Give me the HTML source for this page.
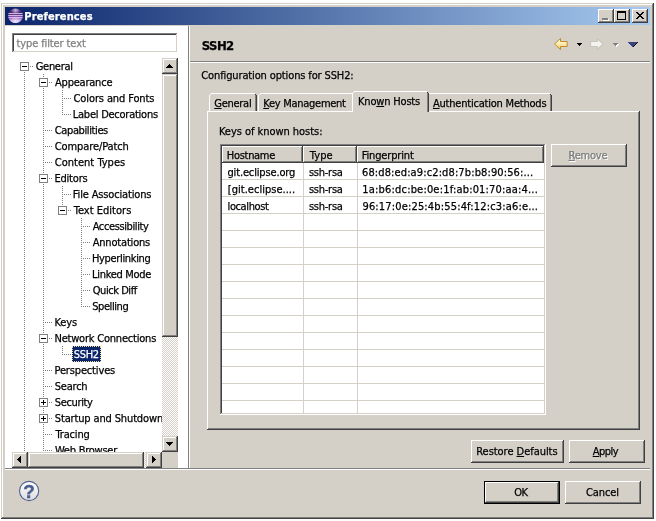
<!DOCTYPE html>
<html><head><meta charset="utf-8"><title>Preferences</title>
<style>
html,body{margin:0;padding:0;background:#fff;}
body{width:656px;height:521px;position:relative;overflow:hidden;font-family:"DejaVu Sans Condensed","Liberation Sans",sans-serif;font-size:11px;color:#000;}
div,span{position:absolute;box-sizing:border-box;white-space:nowrap;}
.t{line-height:13px;height:13px;opacity:0.999;-webkit-text-stroke:0.25px;}
u{text-decoration:underline;text-underline-offset:1px;text-decoration-thickness:1px;}
.raised{background:#d4d0c8;box-shadow:inset -1px -1px 0 #404040,inset 1px 1px 0 #fff,inset -2px -2px 0 #808080,inset 2px 2px 0 #d4d0c8;}
.sbtn{background:#d4d0c8;box-shadow:inset -1px -1px 0 #404040,inset 1px 1px 0 #d4d0c8,inset -2px -2px 0 #808080,inset 2px 2px 0 #fff;}
.sunken{background:#fff;box-shadow:inset -1px -1px 0 #fff,inset 1px 1px 0 #808080,inset -2px -2px 0 #d4d0c8,inset 2px 2px 0 #404040;}
.track{background-color:#fff;background-image:conic-gradient(#d4d0c8 25%,#fff 0 50%,#d4d0c8 0 75%,#fff 0);background-size:2px 2px;}
.hd{background:#d4d0c8;box-shadow:inset -1px -1px 0 #404040,inset 1px 1px 0 #fff,inset -2px -2px 0 #808080;}
.vd{width:1px;background-image:linear-gradient(#808080 50%,transparent 50%);background-size:1px 2px;}
.hdot{height:1px;background-image:linear-gradient(90deg,#808080 50%,transparent 50%);background-size:2px 1px;}
.box{width:9px;height:9px;border:1px solid #808080;background:#fff;}
.box i{position:absolute;left:1px;top:3px;width:5px;height:1px;background:#000;}
.box b{position:absolute;left:3px;top:1px;width:1px;height:5px;background:#000;}
</style></head>
<body>
<div style="left:1px;top:3px;width:653px;height:516px;background:#d4d0c8;box-shadow:inset -1px -1px 0 #404040,inset 1px 1px 0 #d4d0c8,inset -2px -2px 0 #808080,inset 2px 2px 0 #fff;"></div>
<div style="left:5px;top:7px;width:645px;height:18px;background:linear-gradient(90deg,#0a246a,#a6caf0);"></div>
<svg style="position:absolute;left:7px;top:8px" width="17" height="16" viewBox="0 0 17 16">
<defs><linearGradient id="eg" x1="0" y1="0" x2="0" y2="1"><stop offset="0" stop-color="#6a4a92"/><stop offset="0.3" stop-color="#4a2470"/><stop offset="0.5" stop-color="#7a3fa4"/><stop offset="0.75" stop-color="#b48ad6"/><stop offset="1" stop-color="#e4d2f2"/></linearGradient>
<radialGradient id="eh" cx="0.5" cy="0.12" r="0.3"><stop offset="0" stop-color="#d8c8e8" stop-opacity="0.9"/><stop offset="1" stop-color="#d8c8e8" stop-opacity="0"/></radialGradient>
<radialGradient id="el" cx="0.5" cy="0.95" r="0.45"><stop offset="0" stop-color="#f4eafa" stop-opacity="0.9"/><stop offset="1" stop-color="#f4eafa" stop-opacity="0"/></radialGradient></defs>
<circle cx="8.5" cy="7.8" r="7.3" fill="url(#eg)"/>
<circle cx="8.5" cy="7.8" r="7.3" fill="url(#eh)"/>
<circle cx="8.5" cy="7.8" r="7.3" fill="url(#el)"/>
<rect x="1.4" y="5" width="14.2" height="1" fill="#e6d8f0" opacity="0.8"/>
<rect x="1.2" y="7" width="14.6" height="1" fill="#e6d8f0" opacity="0.8"/>
<rect x="1.4" y="9" width="14.2" height="1" fill="#e6d6f2" opacity="0.75"/>
</svg>
<span id="t1" class="t" style="left:24.35px;top:10px;letter-spacing:0.12px;color:#fff;font-weight:bold;font-size:11px;">Preferences</span>
<div class="raised" style="left:598px;top:9px;width:16px;height:14px;"></div>
<div class="raised" style="left:614px;top:9px;width:16px;height:14px;"></div>
<div class="raised" style="left:632px;top:9px;width:16px;height:14px;"></div>
<div style="left:603px;top:19px;width:6px;height:2px;background:#fff;"></div>
<div style="left:602px;top:18px;width:6px;height:2px;background:#808080;"></div>
<div style="left:617px;top:11px;width:9px;height:9px;border:1px solid #000;border-top-width:2px;"></div>
<svg style="position:absolute;left:636px;top:12px" width="8" height="7" viewBox="0 0 8 7" shape-rendering="crispEdges"><path d="M0 0h2v1h-2zM6 0h2v1h-2zM1 1h2v1h-2zM5 1h2v1h-2zM2 2h4v1h-4zM3 3h2v1h-2zM2 4h4v1h-4zM1 5h2v1h-2zM5 5h2v1h-2zM0 6h2v1h-2zM6 6h2v1h-2z" fill="#000"/></svg>
<div style="left:5px;top:26px;width:183px;height:442px;background:#fff;"></div>
<div style="left:188px;top:26px;width:1px;height:442px;background:#808080;"></div>
<div style="left:189px;top:26px;width:1px;height:442px;background:#fff;"></div>
<div class="sunken" style="left:12px;top:33px;width:166px;height:20px;"></div>
<span id="t2" class="t" style="left:16.51px;top:37px;letter-spacing:-0.11px;color:#808080;">type filter text</span>
<div style="left:12px;top:58px;width:150px;height:394px;overflow:hidden;">
<div class="vd" style="left:12px;top:14px;width:1px;height:380px;"></div>
<div class="vd" style="left:31px;top:16px;width:1px;height:378px;"></div>
<div class="vd" style="left:50px;top:32px;width:1px;height:25px;"></div>
<div class="vd" style="left:50px;top:128px;width:1px;height:20px;"></div>
<div class="vd" style="left:50px;top:288px;width:1px;height:9px;"></div>
<div class="vd" style="left:69px;top:160px;width:1px;height:89px;"></div>
<div class="hdot" style="left:18px;top:8px;width:4px;height:1px;"></div>
<div class="box" style="left:8px;top:4px;width:9px;height:9px;"><i></i></div>
<span id="t3" class="t" style="left:23.71px;top:2px;letter-spacing:-0.29px;">General</span>
<div class="hdot" style="left:37px;top:24px;width:4px;height:1px;"></div>
<div class="box" style="left:27px;top:20px;width:9px;height:9px;"><i></i></div>
<span id="t4" class="t" style="left:43.04px;top:18px;letter-spacing:-0.22px;">Appearance</span>
<div class="hdot" style="left:50px;top:40px;width:9px;height:1px;"></div>
<span id="t5" class="t" style="left:61.56px;top:34px;letter-spacing:-0.11px;">Colors and Fonts</span>
<div class="hdot" style="left:50px;top:56px;width:9px;height:1px;"></div>
<span id="t6" class="t" style="left:60.8px;top:50px;letter-spacing:-0.25px;">Label Decorations</span>
<div class="hdot" style="left:31px;top:72px;width:9px;height:1px;"></div>
<span id="t7" class="t" style="left:42.82px;top:66px;letter-spacing:-0.39px;">Capabilities</span>
<div class="hdot" style="left:31px;top:88px;width:9px;height:1px;"></div>
<span id="t8" class="t" style="left:42.82px;top:82px;letter-spacing:-0.11px;">Compare/Patch</span>
<div class="hdot" style="left:31px;top:104px;width:9px;height:1px;"></div>
<span id="t9" class="t" style="left:42.82px;top:98px;letter-spacing:0.01px;">Content Types</span>
<div class="hdot" style="left:37px;top:120px;width:4px;height:1px;"></div>
<div class="box" style="left:27px;top:116px;width:9px;height:9px;"><i></i></div>
<span id="t10" class="t" style="left:42.47px;top:114px;letter-spacing:-0.21px;">Editors</span>
<div class="hdot" style="left:50px;top:136px;width:9px;height:1px;"></div>
<span id="t11" class="t" style="left:60.8px;top:130px;letter-spacing:-0.15px;">File Associations</span>
<div class="hdot" style="left:56px;top:152px;width:4px;height:1px;"></div>
<div class="box" style="left:46px;top:148px;width:9px;height:9px;"><i></i></div>
<span id="t12" class="t" style="left:61.7px;top:146px;letter-spacing:0.02px;">Text Editors</span>
<div class="hdot" style="left:69px;top:168px;width:9px;height:1px;"></div>
<span id="t13" class="t" style="left:80.67px;top:162px;letter-spacing:-0.39px;">Accessibility</span>
<div class="hdot" style="left:69px;top:184px;width:9px;height:1px;"></div>
<span id="t14" class="t" style="left:80.67px;top:178px;letter-spacing:-0.18px;">Annotations</span>
<div class="hdot" style="left:69px;top:200px;width:9px;height:1px;"></div>
<span id="t15" class="t" style="left:80.0px;top:194px;letter-spacing:-0.34px;">Hyperlinking</span>
<div class="hdot" style="left:69px;top:216px;width:9px;height:1px;"></div>
<span id="t16" class="t" style="left:80.0px;top:210px;letter-spacing:-0.30px;">Linked Mode</span>
<div class="hdot" style="left:69px;top:232px;width:9px;height:1px;"></div>
<span id="t17" class="t" style="left:80.71px;top:226px;letter-spacing:-0.44px;">Quick Diff</span>
<div class="hdot" style="left:69px;top:248px;width:9px;height:1px;"></div>
<span id="t18" class="t" style="left:80.15px;top:242px;letter-spacing:-0.41px;">Spelling</span>
<div class="hdot" style="left:31px;top:264px;width:9px;height:1px;"></div>
<span id="t19" class="t" style="left:42.48px;top:258px;letter-spacing:-0.12px;">Keys</span>
<div class="hdot" style="left:37px;top:280px;width:4px;height:1px;"></div>
<div class="box" style="left:27px;top:276px;width:9px;height:9px;"><i></i></div>
<span id="t20" class="t" style="left:42.47px;top:274px;letter-spacing:-0.21px;">Network Connections</span>
<div class="hdot" style="left:50px;top:296px;width:9px;height:1px;"></div>
<div style="left:60px;top:288px;width:29px;height:16px;background:#0a246a;outline:1px dotted #f5db95;outline-offset:-1px;"></div>
<span id="t21" class="t" style="left:61.85px;top:290px;letter-spacing:-0.39px;color:#fff;">SSH2</span>
<div class="hdot" style="left:31px;top:312px;width:9px;height:1px;"></div>
<span id="t22" class="t" style="left:42.47px;top:306px;letter-spacing:-0.15px;">Perspectives</span>
<div class="hdot" style="left:31px;top:328px;width:9px;height:1px;"></div>
<span id="t23" class="t" style="left:42.78px;top:322px;letter-spacing:-0.22px;">Search</span>
<div class="hdot" style="left:37px;top:344px;width:4px;height:1px;"></div>
<div class="box" style="left:27px;top:340px;width:9px;height:9px;"><i></i><b></b></div>
<span id="t24" class="t" style="left:42.78px;top:338px;letter-spacing:-0.35px;">Security</span>
<div class="hdot" style="left:37px;top:360px;width:4px;height:1px;"></div>
<div class="box" style="left:27px;top:356px;width:9px;height:9px;"><i></i><b></b></div>
<span id="t25" class="t" style="left:42.78px;top:354px;letter-spacing:-0.14px;">Startup and Shutdown</span>
<div class="hdot" style="left:31px;top:376px;width:9px;height:1px;"></div>
<span id="t26" class="t" style="left:43.52px;top:370px;letter-spacing:-0.17px;">Tracing</span>
<div class="hdot" style="left:31px;top:392px;width:9px;height:1px;"></div>
<span id="t27" class="t" style="left:42.94px;top:386px;letter-spacing:-0.24px;">Web Browser</span>
</div>
<div class="track" style="left:162px;top:58px;width:16px;height:394px;"></div>
<div class="sbtn" style="left:162px;top:58px;width:16px;height:16px;"></div>
<svg style="position:absolute;left:166px;top:64px" width="7" height="4" viewBox="0 0 7 4"><path d="M3 0h1v1h1v1h1v1h1v1H0V3h1V2h1V1h1z" fill="#000"/></svg>
<div class="sbtn" style="left:162px;top:74px;width:16px;height:263px;"></div>
<div class="sbtn" style="left:162px;top:436px;width:16px;height:16px;"></div>
<svg style="position:absolute;left:166px;top:442px" width="7" height="4" viewBox="0 0 7 4"><path d="M0 0h7v1H6v1H5v1H4v1H3V3H2V2H1V1H0z" fill="#000"/></svg>
<div class="track" style="left:12px;top:452px;width:150px;height:16px;"></div>
<div class="sbtn" style="left:12px;top:452px;width:16px;height:16px;"></div>
<svg style="position:absolute;left:17px;top:456px" width="4" height="7" viewBox="0 0 4 7"><path d="M3 0h1v7H3V6H2V5H1V4H0V3h1V2h1V1h1z" fill="#000"/></svg>
<div class="sbtn" style="left:28px;top:452px;width:116px;height:16px;"></div>
<div class="sbtn" style="left:146px;top:452px;width:16px;height:16px;"></div>
<svg style="position:absolute;left:152px;top:456px" width="4" height="7" viewBox="0 0 4 7"><path d="M0 0h1v1h1v1h1v1h1v1H3v1H2v1H1v1H0z" fill="#000"/></svg>
<div style="left:162px;top:452px;width:16px;height:16px;background:#d4d0c8;"></div>
<span id="t28" class="t" style="left:201.72px;top:39px;letter-spacing:-0.55px;font-weight:bold;font-size:13px;">SSH2</span>
<div style="left:190px;top:61px;width:460px;height:1px;background:#808080;"></div>
<div style="left:190px;top:62px;width:460px;height:1px;background:#fff;"></div>
<svg style="position:absolute;left:553px;top:37px" width="17" height="14" viewBox="0 0 17 14">
<defs><linearGradient id="ya" x1="0" y1="0" x2="0" y2="1"><stop offset="0" stop-color="#fffdee"/><stop offset="0.45" stop-color="#fdeeb4"/><stop offset="1" stop-color="#f4c662"/></linearGradient></defs>
<path d="M7.5 1.5L1.5 7l6 5.5v-3h6.7v-5H7.5z" fill="url(#ya)" stroke="#bd8c2c" stroke-width="1" stroke-linejoin="round"/></svg>
<svg style="position:absolute;left:577px;top:43px" width="5" height="3" viewBox="0 0 5 3"><path d="M0 0h5v1H4v1H3v1H2V2H1V1H0z" fill="#000"/></svg>
<svg style="position:absolute;left:589px;top:37px" width="17" height="14" viewBox="0 0 17 14">
<path d="M8.2 1.5l6 5.5-6 5.5v-3H1.5v-5h6.7z" fill="#f4f3f0" stroke="#c8c5bd" stroke-width="1.2" stroke-linejoin="round"/></svg>
<svg style="position:absolute;left:614px;top:44px" width="5" height="3" viewBox="0 0 5 3"><path d="M0 0h5v1H4v1H3v1H2V2H1V1H0z" fill="#fff"/></svg>
<svg style="position:absolute;left:613px;top:43px" width="5" height="3" viewBox="0 0 5 3"><path d="M0 0h5v1H4v1H3v1H2V2H1V1H0z" fill="#808080"/></svg>
<svg style="position:absolute;left:628px;top:42px" width="10" height="5" viewBox="0 0 10 5" shape-rendering="crispEdges"><path d="M1 0h8v1h-8zM2 1h6v1h-6zM3 2h4v1h-4zM4 3h2v1h-2z" fill="#3e4472"/><path d="M0 0h1v1h-1zM1 1h1v1h-1zM2 2h1v1h-1zM3 3h1v1h-1zM4 4h1v1h-1z" fill="#3a3cb4"/><path d="M9 0h1v1h-1zM8 1h1v1h-1zM7 2h1v1h-1zM6 3h1v1h-1zM5 4h1v1h-1z" fill="#101018"/></svg>
<span id="t29" class="t" style="left:201.34px;top:69px;letter-spacing:-0.13px;">Configuration options for SSH2:</span>
<div style="left:207px;top:111px;width:433px;height:319px;background:#d4d0c8;box-shadow:inset -1px -1px 0 #404040,inset 1px 1px 0 #fff,inset -2px -2px 0 #808080;"></div>
<div style="left:209px;top:93px;width:48px;height:18px;background:#d4d0c8;"></div>
<div style="left:209px;top:95px;width:1px;height:16px;background:#fff;"></div>
<div style="left:210px;top:94px;width:1px;height:1px;background:#fff;"></div>
<div style="left:211px;top:93px;width:44px;height:1px;background:#fff;"></div>
<div style="left:255px;top:95px;width:1px;height:16px;background:#808080;"></div>
<div style="left:256px;top:95px;width:1px;height:16px;background:#404040;"></div>
<div style="left:255px;top:94px;width:1px;height:1px;background:#404040;"></div>
<div style="left:209px;top:93px;width:2px;height:1px;background:#d4d0c8;"></div>
<div style="left:209px;top:94px;width:1px;height:1px;background:#d4d0c8;"></div>
<div style="left:255px;top:93px;width:2px;height:1px;background:#d4d0c8;"></div>
<div style="left:256px;top:94px;width:1px;height:1px;background:#d4d0c8;"></div>
<span id="t30" class="t" style="left:214.22px;top:97px;letter-spacing:-0.26px;"><u>G</u>eneral</span>
<div style="left:258px;top:93px;width:97px;height:18px;background:#d4d0c8;"></div>
<div style="left:258px;top:95px;width:1px;height:16px;background:#fff;"></div>
<div style="left:259px;top:94px;width:1px;height:1px;background:#fff;"></div>
<div style="left:260px;top:93px;width:93px;height:1px;background:#fff;"></div>
<div style="left:353px;top:95px;width:1px;height:16px;background:#808080;"></div>
<div style="left:354px;top:95px;width:1px;height:16px;background:#404040;"></div>
<div style="left:353px;top:94px;width:1px;height:1px;background:#404040;"></div>
<div style="left:258px;top:93px;width:2px;height:1px;background:#d4d0c8;"></div>
<div style="left:258px;top:94px;width:1px;height:1px;background:#d4d0c8;"></div>
<div style="left:353px;top:93px;width:2px;height:1px;background:#d4d0c8;"></div>
<div style="left:354px;top:94px;width:1px;height:1px;background:#d4d0c8;"></div>
<span id="t31" class="t" style="left:263.27px;top:97px;letter-spacing:-0.27px;"><u>K</u>ey Management</span>
<div style="left:427px;top:93px;width:125px;height:18px;background:#d4d0c8;"></div>
<div style="left:427px;top:95px;width:1px;height:16px;background:#fff;"></div>
<div style="left:428px;top:94px;width:1px;height:1px;background:#fff;"></div>
<div style="left:429px;top:93px;width:121px;height:1px;background:#fff;"></div>
<div style="left:550px;top:95px;width:1px;height:16px;background:#808080;"></div>
<div style="left:551px;top:95px;width:1px;height:16px;background:#404040;"></div>
<div style="left:550px;top:94px;width:1px;height:1px;background:#404040;"></div>
<div style="left:427px;top:93px;width:2px;height:1px;background:#d4d0c8;"></div>
<div style="left:427px;top:94px;width:1px;height:1px;background:#d4d0c8;"></div>
<div style="left:550px;top:93px;width:2px;height:1px;background:#d4d0c8;"></div>
<div style="left:551px;top:94px;width:1px;height:1px;background:#d4d0c8;"></div>
<span id="t32" class="t" style="left:432.92px;top:97px;letter-spacing:-0.21px;"><u>A</u>uthentication Methods</span>
<div style="left:352px;top:91px;width:77px;height:21px;background:#d4d0c8;"></div>
<div style="left:352px;top:93px;width:1px;height:19px;background:#fff;"></div>
<div style="left:353px;top:92px;width:1px;height:1px;background:#fff;"></div>
<div style="left:354px;top:91px;width:73px;height:1px;background:#fff;"></div>
<div style="left:427px;top:93px;width:1px;height:19px;background:#808080;"></div>
<div style="left:428px;top:93px;width:1px;height:19px;background:#404040;"></div>
<div style="left:427px;top:92px;width:1px;height:1px;background:#404040;"></div>
<div style="left:352px;top:91px;width:2px;height:1px;background:#d4d0c8;"></div>
<div style="left:352px;top:92px;width:1px;height:1px;background:#d4d0c8;"></div>
<div style="left:427px;top:91px;width:2px;height:1px;background:#d4d0c8;"></div>
<div style="left:428px;top:92px;width:1px;height:1px;background:#d4d0c8;"></div>
<span id="t33" class="t" style="left:358.0px;top:95px;letter-spacing:-0.18px;">Kno<u>w</u>n Hosts</span>
<span id="t34" class="t" style="left:218.98px;top:125px;letter-spacing:-0.04px;">Keys of known hosts:</span>
<div class="sunken" style="left:220px;top:144px;width:326px;height:271px;"></div>
<div class="hd" style="left:222px;top:146px;width:81px;height:17px;"></div>
<span id="t35" class="t" style="left:226.8px;top:149px;letter-spacing:-0.30px;">Hostname</span>
<div class="hd" style="left:303px;top:146px;width:54px;height:17px;"></div>
<span id="t36" class="t" style="left:309.68px;top:149px;letter-spacing:0.14px;">Type</span>
<div class="hd" style="left:357px;top:146px;width:187px;height:17px;"></div>
<span id="t37" class="t" style="left:361.8px;top:149px;letter-spacing:-0.16px;">Fingerprint</span>
<div style="left:222px;top:179px;width:322px;height:1px;background:#d4d0c8;"></div>
<div style="left:222px;top:196px;width:322px;height:1px;background:#d4d0c8;"></div>
<div style="left:222px;top:213px;width:322px;height:1px;background:#d4d0c8;"></div>
<div style="left:222px;top:230px;width:322px;height:1px;background:#d4d0c8;"></div>
<div style="left:222px;top:247px;width:322px;height:1px;background:#d4d0c8;"></div>
<div style="left:222px;top:264px;width:322px;height:1px;background:#d4d0c8;"></div>
<div style="left:222px;top:281px;width:322px;height:1px;background:#d4d0c8;"></div>
<div style="left:222px;top:298px;width:322px;height:1px;background:#d4d0c8;"></div>
<div style="left:222px;top:315px;width:322px;height:1px;background:#d4d0c8;"></div>
<div style="left:222px;top:332px;width:322px;height:1px;background:#d4d0c8;"></div>
<div style="left:222px;top:349px;width:322px;height:1px;background:#d4d0c8;"></div>
<div style="left:222px;top:366px;width:322px;height:1px;background:#d4d0c8;"></div>
<div style="left:222px;top:383px;width:322px;height:1px;background:#d4d0c8;"></div>
<div style="left:222px;top:400px;width:322px;height:1px;background:#d4d0c8;"></div>
<div style="left:303px;top:163px;width:1px;height:250px;background:#d4d0c8;"></div>
<div style="left:357px;top:163px;width:1px;height:250px;background:#d4d0c8;"></div>
<span id="t38" class="t" style="left:227.47px;top:166px;letter-spacing:-0.15px;">git.eclipse.org</span>
<span id="t39" class="t" style="left:308.9px;top:166px;letter-spacing:-0.24px;">ssh-rsa</span>
<span id="t40" class="t" style="left:361.99px;top:166px;letter-spacing:0.12px;">68:d8:ed:a9:c2:d8:7b:b8:90:56:...</span>
<span id="t41" class="t" style="left:227.84px;top:183px;letter-spacing:0.02px;">[git.eclipse....</span>
<span id="t42" class="t" style="left:308.9px;top:183px;letter-spacing:-0.24px;">ssh-rsa</span>
<span id="t43" class="t" style="left:362.37px;top:183px;letter-spacing:0.18px;">1a:b6:dc:be:0e:1f:ab:01:70:aa:4...</span>
<span id="t44" class="t" style="left:227.55px;top:200px;letter-spacing:-0.39px;">localhost</span>
<span id="t45" class="t" style="left:308.9px;top:200px;letter-spacing:-0.24px;">ssh-rsa</span>
<span id="t46" class="t" style="left:362.43px;top:200px;letter-spacing:0.16px;">96:17:0e:25:4b:55:4f:12:c3:a6:e...</span>
<div class="raised" style="left:551px;top:144px;width:76px;height:23px;"></div>
<span id="t47" class="t" style="left:568.47px;top:149px;letter-spacing:-0.20px;color:#808080;text-shadow:1px 1px 0 #fff;"><u>R</u>emove</span>
<div class="raised" style="left:471px;top:440px;width:93px;height:23px;"></div>
<span id="t48" class="t" style="left:476.27px;top:445px;letter-spacing:-0.04px;">Restore <u>D</u>efaults</span>
<div class="raised" style="left:569px;top:440px;width:76px;height:23px;"></div>
<span id="t49" class="t" style="left:592.68px;top:445px;letter-spacing:-0.49px;"><u>A</u>pply</span>
<div style="left:5px;top:468px;width:645px;height:1px;background:#808080;"></div>
<div style="left:5px;top:469px;width:645px;height:1px;background:#fff;"></div>
<svg style="position:absolute;left:18px;top:480px;opacity:0.999" width="22" height="22" viewBox="0 0 22 22">
<defs><linearGradient id="hg" x1="0" y1="0" x2="0" y2="1"><stop offset="0" stop-color="#ffffff"/><stop offset="1" stop-color="#dcdcde"/></linearGradient></defs>
<circle cx="11.1" cy="11" r="9.6" fill="url(#hg)" stroke="#4f6492" stroke-width="1.1"/>
<text x="11.1" y="18" text-anchor="middle" font-family="Liberation Sans,sans-serif" font-weight="bold" font-size="19" fill="#4a5f8c" stroke="#4a5f8c" stroke-width="0.4">?</text></svg>
<div style="left:484px;top:481px;width:76px;height:23px;background:#000;"></div>
<div class="raised" style="left:485px;top:482px;width:74px;height:21px;"></div>
<span id="t50" class="t" style="left:514.33px;top:486px;letter-spacing:-0.55px;">OK</span>
<div class="raised" style="left:565px;top:481px;width:76px;height:23px;"></div>
<span id="t51" class="t" style="left:585.92px;top:486px;letter-spacing:-0.07px;">Cancel</span>
</body></html>
